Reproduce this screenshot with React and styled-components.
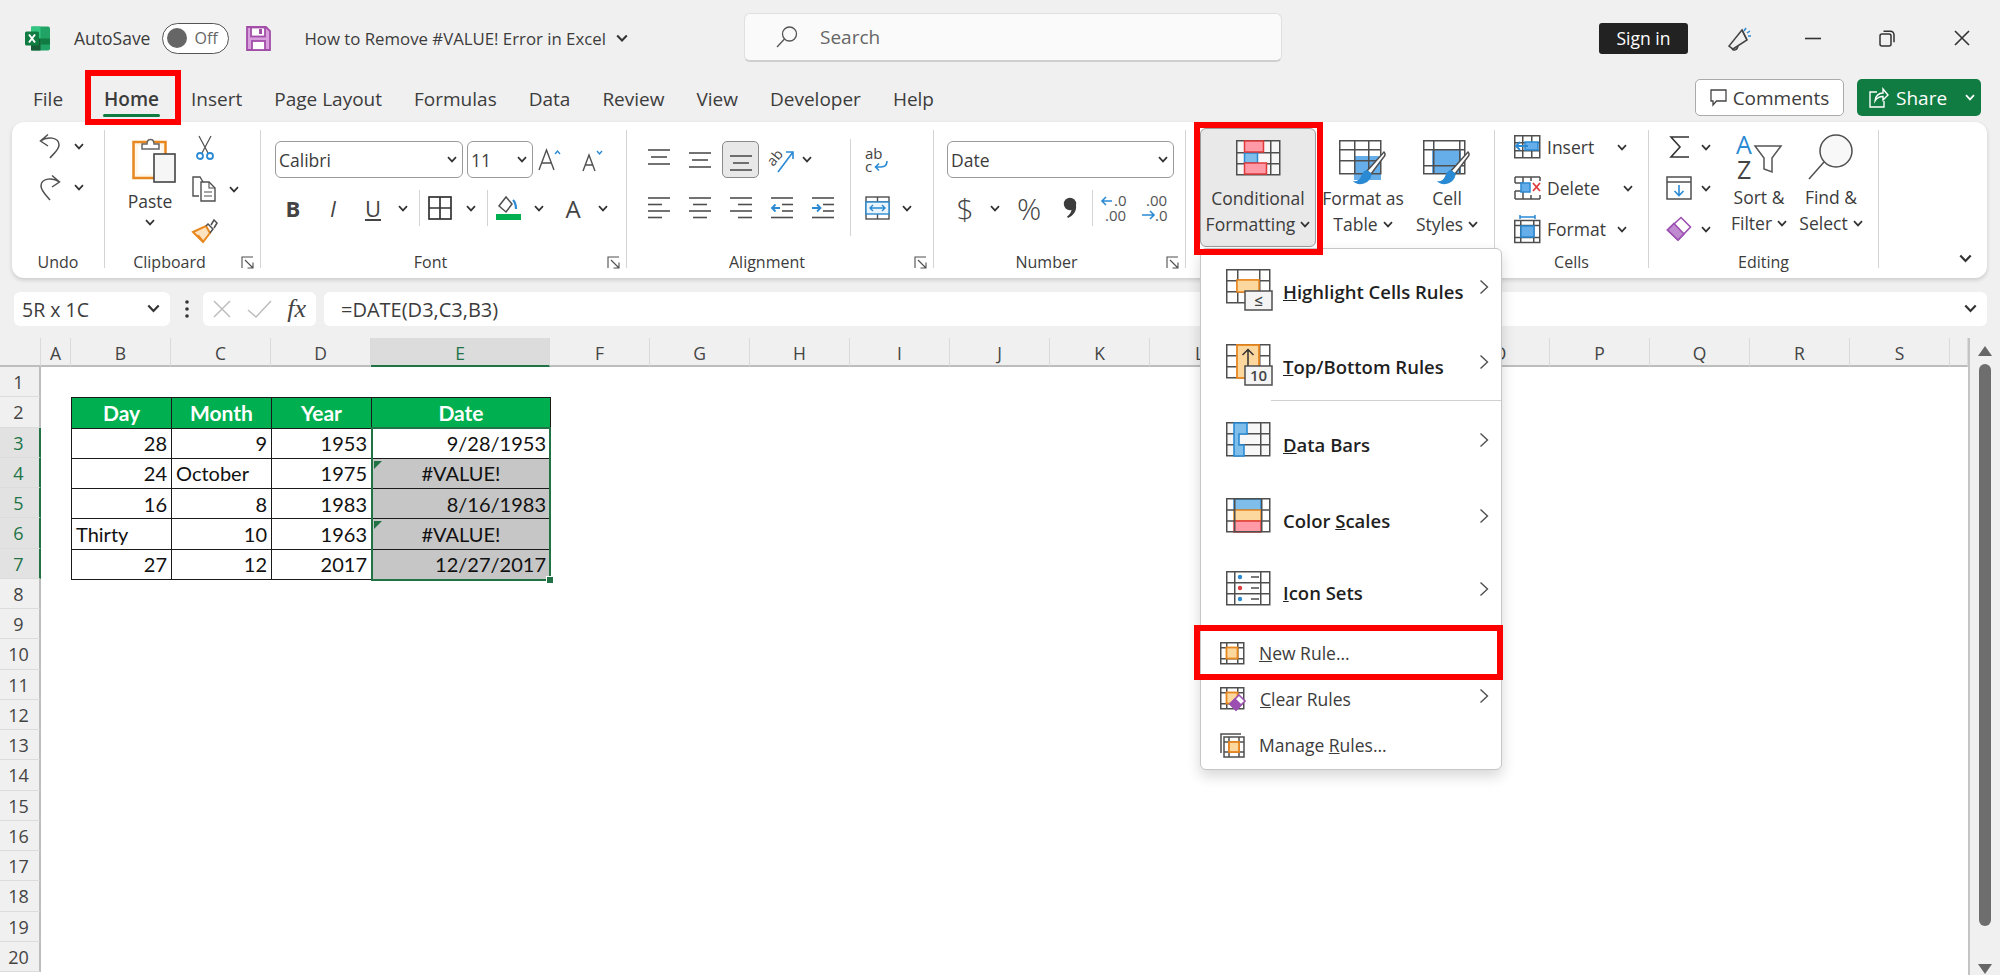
import React from "react"
import styled, { createGlobalStyle } from "styled-components"

const ui = '"Open Sans", "Noto Sans", sans-serif'
const calibri = 'Lato, "Open Sans", sans-serif'

const GlobalStyle = createGlobalStyle`
  html, body { margin: 0; padding: 0; background: #f0f0f0; }
  body { font-family: ${ui}; color: #3c3c3c; }
  svg { display: block; flex: none; overflow: visible; }
`

const Page = styled.div`
  position: relative;
  width: 2000px;
  height: 975px;
  overflow: hidden;
  display: flex;
  flex-direction: column;
  background: #f0f0f0;
`

// title bar
const TitleBar = styled.div`
  height: 76px;
  flex: none;
  display: flex;
  align-items: flex-start;
`
const TitleLeft = styled.div`
  width: 744px;
  height: 76px;
  flex: none;
  display: flex;
  align-items: center;
  padding-left: 25px;
  box-sizing: border-box;
`
const TitleText = styled.span`
  font-size: ${(p) => p.$size || 17.5}px;
  white-space: nowrap;
  margin-left: ${(p) => p.$ml || 0}px;
`
const Toggle = styled.div`
  width: 67px;
  height: 31px;
  box-sizing: border-box;
  margin-left: 12px;
  border: 1.5px solid #555;
  border-radius: 16px;
  background: #fff;
  display: flex;
  align-items: center;
  padding-left: 4px;
  gap: 7px;
  font-size: 16px;
  color: #666;
`
const Knob = styled.div`
  width: 20px;
  height: 20px;
  border-radius: 50%;
  background: #666;
`
const SearchBox = styled.div`
  width: 538px;
  height: 49px;
  margin-top: 13px;
  box-sizing: border-box;
  flex: none;
  display: flex;
  align-items: center;
  gap: 22px;
  padding-left: 31px;
  background: #fafafa;
  border: 1px solid #e0e0e0;
  border-bottom: 2px solid #cfcfcf;
  border-radius: 6px;
  font-size: 19px;
  color: #666;
`
const TitleRight = styled.div`
  flex: 1;
  height: 76px;
  display: flex;
  align-items: center;
  padding-left: 317px;
`
const SignIn = styled.div`
  width: 89px;
  height: 31px;
  border-radius: 3px;
  background: #222;
  color: #fff;
  font-size: 17.5px;
  display: flex;
  align-items: center;
  justify-content: center;
`
const WindowButton = styled.div`
  margin-left: ${(p) => p.$ml}px;
`

// tabs row
const TabRow = styled.div`
  height: 46px;
  flex: none;
  display: flex;
  align-items: flex-start;
  padding-left: 33px;
  padding-right: 19px;
  gap: 32px;
  font-size: 19px;
`
const Tab = styled.div`
  position: relative;
  line-height: 46px;
  height: 46px;
  margin-left: ${(p) => p.$ml || 0}px;
  font-weight: ${(p) => (p.$active ? 600 : 400)};
  &::after {
    content: "";
    display: ${(p) => (p.$active ? "block" : "none")};
    position: absolute;
    left: -1px;
    right: -1px;
    top: 38px;
    height: 3px;
    border-radius: 2px;
    background: #107c41;
  }
`
const TabActions = styled.div`
  margin-left: auto;
  display: flex;
  gap: 13px;
  height: 37px;
  margin-top: 3px;
`
const CommentsButton = styled.div`
  width: 149px;
  box-sizing: border-box;
  border: 1.5px solid #aaa;
  border-radius: 5px;
  background: #fff;
  display: flex;
  align-items: center;
  justify-content: center;
  gap: 6px;
  font-size: 19px;
`
const ShareButton = styled.div`
  width: 124px;
  box-sizing: border-box;
  border-radius: 5px;
  background: #107c41;
  color: #fff;
  display: flex;
  align-items: center;
  gap: 8px;
  padding-left: 12px;
  font-size: 19px;
`

// ribbon
const Ribbon = styled.div`
  height: 156px;
  flex: none;
  margin: 0 13px 0 12px;
  padding: 8px 0 10px;
  box-sizing: border-box;
  display: flex;
  background: #fff;
  border-radius: 12px;
  box-shadow: 0 2px 4px rgba(0, 0, 0, 0.16);
  font-size: 17.5px;
`
const Group = styled.div`
  flex: ${(p) => (p.$w ? `0 0 ${p.$w}px` : 1)};
  box-sizing: border-box;
  display: flex;
  flex-direction: column;
  border-right: ${(p) => (p.$w ? "1px solid #d4d4d4" : "none")};
`
const Body = styled.div`
  flex: 1;
  display: flex;
  flex-direction: ${(p) => p.$dir || "row"};
  padding-left: ${(p) => p.$pl || 0}px;
  padding-top: ${(p) => p.$pt || 0}px;
`
const GroupFooter = styled.div`
  height: 14px;
  flex: none;
  display: flex;
  align-items: center;
  font-size: 16px;
  line-height: 16px;
  transform: translateY(1px);
`
const GroupLabel = styled.div`
  flex: 1;
  text-align: center;
`
const LauncherSlot = styled.div`
  width: 26px;
  display: flex;
  justify-content: center;
`
const ToolStack = styled.div`
  display: grid;
  grid-template-columns: ${(p) => p.$cols};
  grid-auto-rows: 26px;
  row-gap: 15px;
  align-items: center;
  justify-items: center;
  padding-top: ${(p) => p.$pt || 0}px;
  margin-left: ${(p) => p.$ml || 0}px;
`
const PasteColumn = styled.div`
  width: 50px;
  display: flex;
  flex-direction: column;
  align-items: center;
  padding-top: 5px;
  line-height: 20px;
  gap: 8px;
`
const PasteIcon = styled.div`
  margin-left: 8px;
`
const ToolRow = styled.div`
  display: flex;
  align-items: center;
  height: ${(p) => p.$h || 30}px;
  margin-top: ${(p) => p.$mt || 0}px;
`
const Tool = styled.div`
  width: ${(p) => p.$w}px;
  height: 100%;
  flex: none;
  display: flex;
  align-items: center;
  justify-content: center;
`
const ActiveTool = styled(Tool)`
  box-sizing: border-box;
  margin: 0 2px;
  width: 37px;
  background: #e8e8e8;
  border: 1.5px solid #8a8a8a;
  border-radius: 5px;
`
const RowDivider = styled.div`
  width: 1px;
  height: 36px;
  flex: none;
  background: #d4d4d4;
  margin: 0 ${(p) => p.$mr || 0}px 0 ${(p) => p.$ml || 0}px;
`
const Combo = styled.div`
  width: ${(p) => p.$w}px;
  height: 37px;
  flex: none;
  box-sizing: border-box;
  margin-left: ${(p) => p.$ml || 0}px;
  border: 1.5px solid #9a9a9a;
  border-radius: 6px;
  background: #fff;
  display: flex;
  align-items: center;
  justify-content: space-between;
  padding: 0 5px 0 3px;
  font-size: 17.5px;
`
const GlyphText = styled.span`
  font-size: ${(p) => p.$size || 22}px;
  font-weight: ${(p) => p.$weight || 400};
  font-style: ${(p) => p.$italic || "normal"};
  font-family: ${(p) => p.$font || ui};
  text-decoration: ${(p) => p.$line || "none"};
  color: #444;
`
const VerticalRule = styled.div`
  width: 1px;
  height: 97px;
  margin-top: 9px;
  flex: none;
  background: #d4d4d4;
`
const AlignRight = styled.div`
  padding-left: 14px;
  padding-top: 18px;
  display: flex;
  flex-direction: column;
  gap: 23px;
`
const MergeRow = styled.div`
  display: flex;
  align-items: center;
  gap: 12px;
`
const BigButton = styled.div`
  width: ${(p) => p.$w}px;
  height: 119px;
  flex: none;
  box-sizing: border-box;
  margin-top: -2px;
  padding-top: 11px;
  text-align: center;
  line-height: 26px;
  background: ${(p) => (p.$active ? "#e9e9e9" : "transparent")};
  border: 1.5px solid ${(p) => (p.$active ? "#9c9c9c" : "transparent")};
  border-radius: 6px;
`
const BigIcon = styled.div`
  height: 45px;
  display: flex;
  justify-content: center;
`
const ButtonLine = styled.div`
  display: flex;
  align-items: center;
  justify-content: center;
  gap: 5px;
  white-space: nowrap;
`
const CellRows = styled.div`
  display: flex;
  flex-direction: column;
  gap: 15px;
  padding-top: 4px;
`
const CellRow = styled.div`
  display: flex;
  align-items: center;
  height: 26px;
  gap: 6px;
`
const CellName = styled.div`
  width: ${(p) => p.$w}px;
`
const EditColumn = styled.div`
  width: ${(p) => p.$w}px;
  flex: none;
  padding-top: 4px;
  text-align: center;
  line-height: 26px;
`
const EditIcon = styled.div`
  height: 50px;
  display: flex;
  justify-content: center;
`
const CollapseSlot = styled.div`
  flex: 1;
  display: flex;
  justify-content: flex-end;
  align-items: flex-end;
  padding: 0 15px 5px 0;
`

// formula bar
const FormulaBar = styled.div`
  height: 34px;
  flex: none;
  margin: 14px 13px 12px 14px;
  display: flex;
  font-size: 20px;
`
const BarField = styled.div`
  box-sizing: border-box;
  width: ${(p) => (p.$w ? `${p.$w}px` : "auto")};
  flex: ${(p) => (p.$w ? "none" : 1)};
  margin-left: ${(p) => p.$ml || 0}px;
  background: #fff;
  border-radius: 6px;
  display: flex;
  align-items: center;
  justify-content: space-between;
  padding: 0 10px 0 ${(p) => p.$pl || 8}px;
`
const NameValue = styled.span`
  font-size: 19.5px;
`
const Dots = styled.div`
  width: 33px;
  flex: none;
  display: flex;
  align-items: center;
  justify-content: center;
`

// sheet
const SheetArea = styled.div`
  flex: 1;
  display: flex;
  min-height: 0;
`
const SheetGrid = styled.div`
  width: 1968px;
  flex: none;
  display: grid;
  grid-template-columns: 41px 30px 100px 100px 100px 179px repeat(14, 100px) 18px;
  grid-template-rows: 29px repeat(20, 30.25px);
  background: #fff;
  border-right: 2px solid #c4c4c4;
  box-sizing: content-box;
`
const ColHead = styled.div`
  grid-row: 1;
  grid-column: ${(p) => p.$col};
  background: ${(p) => (p.$sel ? "#dcdcdc" : "#f0f0f0")};
  color: ${(p) => (p.$sel ? "#217346" : "#444")};
  border-bottom: 2px solid ${(p) => (p.$sel ? "#217346" : "#bdbdbd")};
  border-right: 1px solid #dadada;
  box-sizing: border-box;
  display: flex;
  align-items: center;
  justify-content: center;
  padding-top: 3px;
  font-size: 17.5px;
`
const RowHead = styled.div`
  grid-column: 1;
  grid-row: ${(p) => p.$row};
  background: ${(p) => (p.$sel ? "#e2e2e2" : "#f0f0f0")};
  color: ${(p) => (p.$sel ? "#217346" : "#444")};
  border-bottom: 1px solid #dcdcdc;
  border-right: 2px solid ${(p) => (p.$sel ? "#217346" : "#bdbdbd")};
  box-sizing: border-box;
  display: flex;
  align-items: center;
  justify-content: center;
  padding: 1px 2px 0 0;
  font-size: 18px;
`
const Cell = styled.div`
  position: relative;
  grid-column: ${(p) => p.$col};
  grid-row: ${(p) => p.$row};
  box-sizing: border-box;
  margin: 0 -1px -1px 0;
  border: 1px solid #1a1a1a;
  padding: 0 4px;
  display: flex;
  align-items: center;
  justify-content: ${(p) => p.$align};
  font-family: ${calibri};
  font-size: ${(p) => (p.$head ? 21 : 20)}px;
  font-weight: ${(p) => (p.$head ? 700 : 400)};
  color: ${(p) => (p.$head ? "#fff" : "#111")};
  background: ${(p) => (p.$head ? "#00b050" : p.$shade ? "#c6c6c6" : "#fff")};
  &::before {
    content: "";
    display: ${(p) => (p.$flag ? "block" : "none")};
    position: absolute;
    left: 2px;
    top: 2px;
    border-top: 8px solid #217346;
    border-right: 8px solid transparent;
  }
`
const Selection = styled.div`
  grid-column: 6;
  grid-row: 4 / 9;
  position: relative;
  z-index: 1;
  border: 2px solid #217346;
  margin: -1px -1px -2px 0;
  pointer-events: none;
  &::after {
    content: "";
    position: absolute;
    right: -5px;
    bottom: -5px;
    width: 6px;
    height: 6px;
    background: #217346;
    border: 1px solid #fff;
  }
`
const ScrollTrack = styled.div`
  flex: 1;
  display: flex;
  flex-direction: column;
  align-items: center;
  padding-top: 8px;
`
const ArrowUp = styled.div`
  border-left: 7px solid transparent;
  border-right: 7px solid transparent;
  border-bottom: 10px solid #666;
`
const ArrowDown = styled(ArrowUp)`
  border-bottom: none;
  border-top: 10px solid #666;
  margin-top: 38px;
`
const Thumb = styled.div`
  width: 12px;
  height: 562px;
  margin-top: 8px;
  border-radius: 6px;
  background: #6e6e6e;
`

// dropdown menu
const Menu = styled.div`
  position: absolute;
  z-index: 3;
  left: 1200px;
  top: 248px;
  width: 302px;
  height: 522px;
  box-sizing: border-box;
  padding-top: 5px;
  background: #fff;
  border: 1.5px solid #c6c6c6;
  border-radius: 6px;
  box-shadow: 0 6px 14px rgba(0, 0, 0, 0.16);
`
const MenuItem = styled.div`
  height: ${(p) => p.$h}px;
  margin-top: ${(p) => p.$mt || 0}px;
  display: flex;
  align-items: center;
  padding: 0 12px 0 ${(p) => (p.$big ? 25 : 19)}px;
  gap: ${(p) => (p.$big ? 10 : 14)}px;
  font-size: ${(p) => (p.$big ? 18.5 : 17.5)}px;
  font-weight: ${(p) => (p.$big ? 600 : 400)};
  color: ${(p) => (p.$big ? "#1f1f1f" : "#3c3c3c")};
  white-space: nowrap;
`
const MenuIcon = styled.div`
  height: ${(p) => p.$h}px;
`
const MenuText = styled.span`
  padding-top: ${(p) => (p.$big ? 2 : 0)}px;
`
const MenuArrow = styled.div`
  margin-left: auto;
  transform: translateY(-3px);
`
const MenuRule = styled.div`
  height: 1px;
  margin-left: 70px;
  background: #d0d0d0;
`

// red callouts drawn over the shot
const Callout = styled.div`
  position: absolute;
  z-index: 4;
  box-sizing: border-box;
  left: ${(p) => p.$x}px;
  top: ${(p) => p.$y}px;
  width: ${(p) => p.$w}px;
  height: ${(p) => p.$h}px;
  border: 6px solid #f00;
  pointer-events: none;
`

const GRAY = "#4f4f4f"
const BLUE = "#2a8ad4"
const ORANGE = "#e8871e"

const Ico = ({ w, h, children, ...rest }) => (
  <svg width={w} height={h} viewBox={`0 0 ${w} ${h}`} fill="none" stroke={GRAY} strokeWidth="1.5" {...rest}>
    {children}
  </svg>
)

const Chev = ({ w = 10, color = "#333" }) => (
  <svg width={w} height={w * 0.7} viewBox="0 0 10 7" fill="none" stroke={color} strokeWidth="1.7">
    <path d="M1 1.2 5 5.4 9 1.2" />
  </svg>
)

const ChevRight = () => (
  <Ico w={10} h={16}>
    <path d="M1.5 1.5 8.5 8 1.5 14.5" strokeWidth="1.4" />
  </Ico>
)

const Launcher = () => (
  <Ico w={13} h={13} strokeWidth="1.1">
    <path d="M1 12V1h11" stroke={GRAY} />
    <path d="M4 4l8 8M12 6.5V12H6.5" stroke={GRAY} />
  </Ico>
)

const ExcelLogo = () => (
  <Ico w={25} h={25} stroke="none">
    <rect x="6" y="0.5" width="19" height="24" rx="2" fill="#21a366" />
    <rect x="6" y="0.5" width="9.5" height="12" fill="#33c481" />
    <rect x="15.5" y="12.5" width="9.5" height="6" fill="#107c41" />
    <rect x="6" y="12.5" width="9.5" height="12" fill="#185c37" />
    <rect x="0" y="5.5" width="14" height="14" rx="1.5" fill="#107c41" />
    <path d="M4 8.5l6 8M10 8.5l-6 8" stroke="#fff" strokeWidth="2" />
  </Ico>
)

const SaveIcon = () => (
  <Ico w={25} h={25} stroke="#a24ea8" strokeWidth="1.8">
    <path d="M1 1h19l4 4v19H1z" fill="#d99fdc" />
    <rect x="5" y="1.5" width="14" height="9" fill="#fff" />
    <rect x="6" y="15" width="13" height="9" fill="#fff" />
    <rect x="13" y="3" width="3" height="5" fill="#a24ea8" stroke="none" />
  </Ico>
)

const SearchIcon = () => (
  <Ico w={22} h={22} strokeWidth="1.3" stroke="#555">
    <circle cx="13.5" cy="8" r="7" />
    <path d="M8.5 13 1 21" />
  </Ico>
)

const Megaphone = () => (
  <Ico w={25} h={26} strokeWidth="1.5" stroke="#444">
    <path d="M15 5 2 21l4 3 14-9z" />
    <path d="M5 23c0 3 5 3 6-2" />
    <path d="M15 5l5 10" />
    <path d="M17 6l2-3M20 8l3-2M21 11h3" stroke={BLUE} />
  </Ico>
)

const Minimize = () => (
  <Ico w={16} h={3}>
    <path d="M0 1.5h16" strokeWidth="1.6" stroke="#333" />
  </Ico>
)
const Restore = () => (
  <Ico w={16} h={17} stroke="#333">
    <rect x="1" y="4" width="11" height="12" rx="2" />
    <path d="M4.5 1.2h7a3.5 3.5 0 0 1 3.5 3.5v7.5" />
  </Ico>
)
const CloseIcon = () => (
  <Ico w={16} h={16} stroke="#333" strokeWidth="1.6">
    <path d="M1 1l14 14M15 1 1 15" />
  </Ico>
)
const CommentIcon = () => (
  <Ico w={17} h={17} strokeWidth="1.3" stroke="#444">
    <path d="M1 1h15v11H6.5l-3.5 4v-4H1z" />
  </Ico>
)
const ShareIcon = () => (
  <Ico w={19} h={21} stroke="#fff" strokeWidth="1.4">
    <path d="M8 5H1v15h14v-6" />
    <path d="M6 14c0-5 4-8 8-8V2l5 6-5 5V9.500c-3 0-6 1-8 4.500z" />
  </Ico>
)

const UndoIcon = () => (
  <Ico w={24} h={26}>
    <path d="M10 1.500 2.500 8l7.500 5M2.500 8C9 3 21 4 21 12c0 5-6 9-9 13" />
  </Ico>
)
const RedoIcon = () => (
  <Ico w={24} h={27}>
    <path d="M14 1.500 21.500 8 14 13M21.500 8C15 3 3 4 3 12c0 5 6 10 9 14" />
  </Ico>
)
const PasteBoard = () => (
  <Ico w={44} h={48}>
    <rect x="1.500" y="7" width="32" height="36" fill="#fff6e8" stroke={ORANGE} strokeWidth="2.500" />
    <path d="M6 11h23v28H6z" fill="#fff" stroke="none" />
    <path d="M10 14v-5h5c0-6 7-6 7 0h5v5z" fill="#fff" stroke="#666" />
    <rect x="22" y="19" width="21" height="28" fill="#f6f6f6" stroke="#444" strokeWidth="1.600" />
  </Ico>
)
const CutIcon = () => (
  <Ico w={20} h={26} strokeWidth="1.2">
    <path d="M4 1l9 17M16 1 7 18" />
    <circle cx="5" cy="21" r="3" stroke={BLUE} strokeWidth="1.800" />
    <circle cx="15" cy="21" r="3" stroke={BLUE} strokeWidth="1.800" />
  </Ico>
)
const CopyIcon = () => (
  <Ico w={26} h={26} strokeWidth="1.400">
    <path d="M7 20H1V1h7l3 5" />
    <path d="M9 6h8l6 6v13H9z" fill="#fff" />
    <path d="M17 6v6h6M12 16h8M12 20h8" strokeWidth="1.100" />
  </Ico>
)
const PainterIcon = () => (
  <Ico w={26} h={25}>
    <path d="M1 14 14 8l4 7-7 9z" fill="#fde3c0" stroke={ORANGE} strokeWidth="2" />
    <path d="M6 17l5 6" stroke={ORANGE} />
    <path d="M14 8l2-2 5 5-3 4M19 7l3-5 3 3-3 5" />
  </Ico>
)

const FontGrow = ({ up }) => (
  <Ico w={24} h={24} strokeWidth="1.400">
    <path d={up ? "M1 22 8.500 2 16 22M4 15h9" : "M2 23 8 7l6 16M4.500 17h7"} />
    <path d={up ? "M17 6l2.500-3 2.500 3" : "M16 3l2.500 3 2.500-3"} stroke={BLUE} />
  </Ico>
)
const BordersIcon = () => (
  <Ico w={24} h={24} strokeWidth="1.700" stroke="#333">
    <rect x="1" y="1" width="22" height="22" />
    <path d="M12 1v22M1 12h22" />
  </Ico>
)
const FillIcon = () => (
  <Ico w={26} h={26}>
    <path d="M10 2 3 11l7 6 6-8z" fill="#fff" />
    <path d="M17 5c3 3 3 6 3 9" stroke={BLUE} strokeWidth="2.200" />
    <rect x="0" y="19" width="25" height="6" fill="#00b050" stroke="none" />
  </Ico>
)

const CommaIcon = () => (
  <Ico w={14} h={22} stroke="none">
    <circle cx="7" cy="7" r="6.200" fill="#3c3c3c" />
    <path d="M13 8c1 6-3 11-8 13l-1-1.500c3-2 5-5 4.500-9z" fill="#3c3c3c" />
  </Ico>
)

const lineSet = (rows) =>
  rows.map(([a, b, y], i) => <path key={i} d={`M${a} ${y}H${b}`} />)

const AlignV = ({ y }) => (
  <Ico w={24} h={26} strokeWidth="1.600">
    {lineSet([
      [1, 23, y],
      [4, 20, y + 7],
      [1, 23, y + 14],
    ])}
  </Ico>
)
const AlignH = ({ kind }) => {
  const s = {
    left: [[1, 23], [1, 15], [1, 23], [1, 15]],
    center: [[1, 23], [5, 19], [1, 23], [5, 19]],
    right: [[1, 23], [9, 23], [1, 23], [9, 23]],
  }[kind]
  return (
    <Ico w={24} h={24} strokeWidth="1.600">
      {lineSet(s.map(([a, b], i) => [a, b, 2 + i * 6.500]))}
    </Ico>
  )
}
const IndentIcon = ({ more }) => (
  <Ico w={24} h={24} strokeWidth="1.600">
    {lineSet([
      [1, 23, 2],
      [12, 23, 8.500],
      [12, 23, 15],
      [1, 23, 21.500],
    ])}
    <path
      d={more ? "M1 12h8M6 8.500 9.500 12 6 15.500" : "M2 12h8M5.500 8.500 2 12l3.500 3.500"}
      stroke={BLUE}
      strokeWidth="1.800"
    />
  </Ico>
)
const OrientIcon = () => (
  <Ico w={28} h={26}>
    <text x="0" y="15" transform="rotate(-50 8 12)" fontFamily={ui} fontSize="14" fill="#444" stroke="none">
      ab
    </text>
    <path d="M10 25 25 5M18 5h7v7" stroke={BLUE} strokeWidth="1.600" />
  </Ico>
)
const WrapIcon = () => (
  <Ico w={24} h={25}>
    <text x="0" y="11" fontFamily={ui} fontSize="15" fill="#444" stroke="none">
      ab
    </text>
    <text x="0" y="24" fontFamily={ui} fontSize="15" fill="#444" stroke="none">
      c
    </text>
    <path d="M22 13c0 4-2 6-6 6h-5M14 15.500 10.500 19l3.500 3.500" stroke={BLUE} strokeWidth="1.600" />
  </Ico>
)
const MergeIcon = () => (
  <Ico w={25} h={24} strokeWidth="1.400">
    <rect x="1" y="1" width="23" height="22" />
    <path d="M12.500 1v5M12.500 18v5M1 6h23" />
    <rect x="1" y="6" width="23" height="12" fill="#eaf4fc" stroke={BLUE} />
    <path d="M5 12h15M8 9l-3 3 3 3M17 9l3 3-3 3" stroke={BLUE} />
  </Ico>
)
const DecimalIcon = ({ inc }) => (
  <Ico w={28} h={28} strokeWidth="1.600">
    <text x={inc ? 13 : 5} y="12" fontFamily={ui} fontSize="15" fill="#555" stroke="none">
      {inc ? ".0" : ".00"}
    </text>
    <text x={inc ? 4 : 14} y="27" fontFamily={ui} fontSize="15" fill="#555" stroke="none">
      {inc ? ".00" : ".0"}
    </text>
    {inc ? (
      <path d="M11 7H1M5 3 1 7l4 4" stroke={BLUE} />
    ) : (
      <path d="M1 21h12M9 17l4 4-4 4" stroke={BLUE} />
    )}
  </Ico>
)

const GridLines = ({ x = 0.75, y = 0.75, w, h, cols, rows, sw = 1.5 }) => (
  <g strokeWidth={sw} stroke={GRAY}>
    <rect x={x} y={y} width={w} height={h} />
    {cols.map((c) => (
      <path key={"c" + c} d={`M${x + c} ${y}v${h}`} />
    ))}
    {rows.map((r) => (
      <path key={"r" + r} d={`M${x} ${y + r}h${w}`} />
    ))}
  </g>
)

const CondFormatIcon = () => (
  <Ico w={45} h={36}>
    <rect x="0.750" y="0.750" width="43" height="34" fill="#f7f7f7" stroke="none" />
    <GridLines w={43} h={34} cols={[8, 34]} rows={[12, 23]} />
    <rect x="8.500" y="13" width="13" height="10" fill="#7fbdea" stroke={BLUE} />
    <path d="M8.500 1h19v11h-19zM8.500 23h22v11h-22z" fill="#ff9aa6" stroke="#e03b3b" strokeWidth="1.500" />
  </Ico>
)
const TableIcon = ({ full }) => (
  <Ico w={48} h={46}>
    <rect x="1" y="1" width="41" height="33" fill="#fff" stroke="none" />
    {full ? (
      <rect x="9" y="9" width="29" height="24" fill="#66aeea" stroke="none" />
    ) : (
      <rect x="15" y="16" width="27" height="24" fill="#66aeea" stroke="none" />
    )}
    <GridLines
      w={41}
      h={33}
      cols={full ? [10, 36] : [15, 29]}
      rows={full ? [9, 25] : [9, 20]}
    />
    <path d="M45 12c2 2 1 4-1 6L32 34l-4-3z" fill="#fff" />
    <path d="M28 31c-2 0-4 2-5 5-1 4-5 6-7 6 4 3 14 2 16-8z" fill={BLUE} stroke={BLUE} />
  </Ico>
)
const InsertIcon = () => (
  <Ico w={27} h={24}>
    <GridLines w={25} h={22} cols={[8, 17]} rows={[7, 15]} />
    <rect x="11" y="7" width="13" height="8" fill="#66aeea" stroke={BLUE} />
    <path d="M14 11H2M6 7 2 11l4 4" stroke={BLUE} strokeWidth="1.800" />
  </Ico>
)
const DeleteIcon = () => (
  <Ico w={27} h={24}>
    <path d="M1 7h8M1 15h8M1 1h25M1 23h25M1 1v6M1 15v8M26 1v4M26 19v4M9 1v6M17 1v4M9 15v8M17 19v4" />
    <rect x="7" y="7" width="9" height="9" fill="#66aeea" stroke={BLUE} />
    <path d="M19 7l7 8M26 7l-7 8" stroke="#e03b3b" strokeWidth="1.800" />
  </Ico>
)
const FormatCellIcon = () => (
  <Ico w={27} h={28}>
    <path d="M6 2h15M6 0v4M21 0v4" stroke={BLUE} strokeWidth="1.500" />
    <GridLines y={5.500} w={25} h={22} cols={[6, 19]} rows={[5, 17]} />
    <rect x="7" y="11" width="13" height="11" fill="#66aeea" stroke={BLUE} />
  </Ico>
)
const SigmaIcon = () => (
  <Ico w={21} h={24} strokeWidth="1.600" stroke="#333">
    <path d="M20 2H2l9 10-9 10h18" />
  </Ico>
)
const FillDownIcon = () => (
  <Ico w={26} h={24}>
    <rect x="1" y="1" width="24" height="22" fill="#fff" />
    <path d="M1 6h24" />
    <path d="M13 9v10M8.500 15 13 19.500 17.500 15" stroke={BLUE} strokeWidth="1.600" />
  </Ico>
)
const EraserIcon = () => (
  <Ico w={26} h={26} stroke="#9b4fb0" strokeWidth="1.600">
    <path d="M15 1.500 24.500 11 12 24 1.500 14z" fill="#fff" />
    <path d="M8 7.500 18 18 12 24 1.500 14z" fill="#c08ad0" />
  </Ico>
)
const SortIcon = () => (
  <Ico w={46} h={46}>
    <text x="0" y="20" fontFamily={ui} fontSize="25" fill={BLUE} stroke="none">
      A
    </text>
    <text x="1" y="45" fontFamily={ui} fontSize="25" fill="#444" stroke="none">
      Z
    </text>
    <path d="M19 12h26L36 24v14l-8-3V24z" fill="#fff" stroke="#555" />
  </Ico>
)
const FindIcon = () => (
  <Ico w={46} h={46} strokeWidth="1.500">
    <circle cx="28" cy="17" r="16" fill="#f8f8f8" />
    <path d="M16 28 1 45" />
  </Ico>
)

const OverlayBox = ({ label }) => (
  <g>
    <rect x="19" y="22" width="27" height="19" fill="#f4f4f4" />
    <text x="32.500" y="37" textAnchor="middle" fontFamily={ui} fontSize="15" fill="#444" stroke="none">
      {label}
    </text>
  </g>
)
const HighlightIcon = () => (
  <Ico w={47} h={42}>
    <rect x="11" y="11" width="22" height="12" fill="#fcd79e" stroke={ORANGE} />
    <GridLines w={43} h={33} cols={[11, 33]} rows={[11, 22]} />
    <rect x="11" y="11" width="22" height="12" fill="#fcd79e" stroke={ORANGE} />
    <OverlayBox label="≤" />
  </Ico>
)
const TopBottomIcon = () => (
  <Ico w={47} h={42}>
    <GridLines w={43} h={33} cols={[11, 33]} rows={[11, 22]} />
    <rect x="11" y="1" width="22" height="33" fill="#fcd79e" stroke={ORANGE} strokeWidth="1.800" />
    <path d="M22 22V6M16.500 11 22 5.500 27.500 11" stroke="#333" />
    <OverlayBox label="10" />
  </Ico>
)
const DataBarsIcon = () => (
  <Ico w={47} h={36}>
    <rect x="1" y="1" width="43" height="33" fill="#f7f7f7" stroke="none" />
    <GridLines w={43} h={33} cols={[8, 34]} rows={[11, 22]} />
    <path d="M8 1h13v11h-8v11h5v11H8z" fill="#7fbdea" stroke={BLUE} strokeWidth="1.600" />
  </Ico>
)
const ColorScalesIcon = () => (
  <Ico w={47} h={36}>
    <rect x="8" y="1" width="27" height="11" fill="#7fbdea" stroke={BLUE} />
    <rect x="8" y="12" width="27" height="11" fill="#fcd79e" stroke={ORANGE} />
    <rect x="8" y="23" width="27" height="11" fill="#ff9aa6" stroke="#e03b3b" />
    <GridLines w={43} h={33} cols={[8, 35]} rows={[]} />
    <path d="M1 12h7M1 23h7M35 12h8M35 23h8" />
  </Ico>
)
const IconSetsIcon = () => (
  <Ico w={47} h={36}>
    <GridLines w={43} h={33} cols={[8, 34]} rows={[11, 22]} />
    <circle cx="14" cy="6" r="2.200" fill={BLUE} stroke="none" />
    <circle cx="14" cy="17" r="2.200" fill="#e03b3b" stroke="none" />
    <circle cx="14" cy="28" r="2.200" fill={BLUE} stroke="none" />
    <path d="M25 6h8M25 17h8M25 28h8" />
  </Ico>
)
const NewRuleIcon = () => (
  <Ico w={25} h={23}>
    <GridLines w={23} h={21} cols={[6, 17]} rows={[5, 16]} />
    <rect x="6.500" y="5.500" width="11" height="11" fill="#fcd79e" stroke={ORANGE} strokeWidth="1.800" />
  </Ico>
)
const ClearRulesIcon = () => (
  <Ico w={26} h={24}>
    <GridLines w={23} h={21} cols={[6, 17]} rows={[5, 16]} />
    <rect x="6.500" y="5.500" width="11" height="11" fill="#fcd79e" stroke={ORANGE} strokeWidth="1.800" />
    <path d="M19 8l6 6-9 9-6-6z" fill="#fff" stroke="#9b4fb0" strokeWidth="1.600" />
    <path d="M15 12l6 6-5 5-6-6z" fill="#9b4fb0" stroke="#9b4fb0" />
  </Ico>
)
const ManageRulesIcon = () => (
  <Ico w={25} h={25}>
    <path d="M1 20V1h20" />
    <GridLines x={4} y={4} w={20} h={20} cols={[5, 15]} rows={[5, 15]} />
    <rect x="9" y="9" width="10" height="10" fill="#fcd79e" stroke={ORANGE} strokeWidth="1.800" />
  </Ico>
)

const LabelRow = ({ children, launcher }) => (
  <GroupFooter>
    <GroupLabel>{children}</GroupLabel>
    {launcher && (
      <LauncherSlot>
        <Launcher />
      </LauncherSlot>
    )}
  </GroupFooter>
)

const LEFT_COLS = ["A", "B", "C", "D", "E", "F", "G", "H", "I", "J", "K", "L", "M", "N", "O", "P", "Q", "R", "S"]
const TABLE = [
  ["Day", "Month", "Year", "Date"],
  [28, 9, 1953, "9/28/1953"],
  [24, "October", 1975, "#VALUE!"],
  [16, 8, 1983, "8/16/1983"],
  ["Thirty", 10, 1963, "#VALUE!"],
  [27, 12, 2017, "12/27/2017"],
]

const cellAlign = (value, head) => {
  if (head || value === "#VALUE!") return "center"
  if (typeof value === "number" || value.includes("/")) return "flex-end"
  return "flex-start"
}

function Sheet() {
  const rowHeads = []
  for (let r = 1; r <= 20; r++) {
    rowHeads.push(
      <RowHead key={r} $row={r + 1} $sel={r >= 3 && r <= 7}>
        {r}
      </RowHead>
    )
  }
  return (
    <SheetGrid>
      <ColHead $col={1} />
      {LEFT_COLS.map((c, i) => (
        <ColHead key={c} $col={i + 2} $sel={c === "E"}>
          {c}
        </ColHead>
      ))}
      <ColHead $col={21} />
      {rowHeads}
      {TABLE.map((row, r) =>
        row.map((value, c) => {
          const isE = c === 3
          return (
            <Cell
              key={`${r}-${c}`}
              $col={c + 3}
              $row={r + 3}
              $head={r === 0}
              $align={cellAlign(value, r === 0)}
              $shade={isE && r > 1}
              $flag={value === "#VALUE!"}
            >
              {value}
            </Cell>
          )
        })
      )}
      <Selection />
    </SheetGrid>
  )
}

export default function App() {
  return (
    <Page>
      <GlobalStyle />

      <TitleBar>
        <TitleLeft>
          <ExcelLogo />
          <TitleText $ml={24}>AutoSave</TitleText>
          <Toggle>
            <Knob />
            Off
          </Toggle>
          <WindowButton $ml={17}>
            <SaveIcon />
          </WindowButton>
          <TitleText $ml={33} $size={16.8}>
            How to Remove #VALUE! Error in Excel
          </TitleText>
          <WindowButton $ml={10}>
            <Chev w={12} />
          </WindowButton>
        </TitleLeft>
        <SearchBox>
          <SearchIcon />
          Search
        </SearchBox>
        <TitleRight>
          <SignIn>Sign in</SignIn>
          <WindowButton $ml={39}>
            <Megaphone />
          </WindowButton>
          <WindowButton $ml={53}>
            <Minimize />
          </WindowButton>
          <WindowButton $ml={58}>
            <Restore />
          </WindowButton>
          <WindowButton $ml={59}>
            <CloseIcon />
          </WindowButton>
        </TitleRight>
      </TitleBar>

      <TabRow>
        <Tab>File</Tab>
        <Tab $active $ml={9}>
          Home
        </Tab>
        <Tab>Insert</Tab>
        <Tab>Page Layout</Tab>
        <Tab>Formulas</Tab>
        <Tab>Data</Tab>
        <Tab>Review</Tab>
        <Tab>View</Tab>
        <Tab>Developer</Tab>
        <Tab>Help</Tab>
        <TabActions>
          <CommentsButton>
            <CommentIcon />
            Comments
          </CommentsButton>
          <ShareButton>
            <ShareIcon />
            Share
            <WindowButton $ml={10}>
              <Chev color="#fff" />
            </WindowButton>
          </ShareButton>
        </TabActions>
      </TabRow>

      <Ribbon>
        <Group $w={93}>
          <Body $pl={26}>
            <ToolStack $cols="24px 34px" $pt={3}>
              <UndoIcon />
              <Chev />
              <RedoIcon />
              <Chev />
            </ToolStack>
          </Body>
          <LabelRow>Undo</LabelRow>
        </Group>

        <Group $w={156}>
          <Body $pl={20}>
            <PasteColumn>
              <PasteIcon>
                <PasteBoard />
              </PasteIcon>
              Paste
              <Chev />
            </PasteColumn>
            <ToolStack $cols="26px 32px" $pt={5} $ml={17}>
              <CutIcon />
              <span />
              <CopyIcon />
              <Chev />
              <PainterIcon />
              <span />
            </ToolStack>
          </Body>
          <LabelRow launcher>Clipboard</LabelRow>
        </Group>

        <Group $w={366}>
          <Body $dir="column" $pl={12} $pt={11}>
            <ToolRow $h={37}>
              <Combo $w={188} $ml={2}>
                Calibri
                <Chev />
              </Combo>
              <Combo $w={66} $ml={4}>
                11
                <Chev />
              </Combo>
              <Tool $w={33}>
                <FontGrow up />
              </Tool>
              <Tool $w={54}>
                <FontGrow />
              </Tool>
            </ToolRow>
            <ToolRow $mt={15}>
              <Tool $w={40}>
                <GlyphText $weight={700}>B</GlyphText>
              </Tool>
              <Tool $w={40}>
                <GlyphText $italic="italic">I</GlyphText>
              </Tool>
              <Tool $w={40}>
                <GlyphText $line="underline">U</GlyphText>
              </Tool>
              <Tool $w={20}>
                <Chev />
              </Tool>
              <RowDivider $ml={6} $mr={5} />
              <Tool $w={30}>
                <BordersIcon />
              </Tool>
              <Tool $w={32}>
                <Chev />
              </Tool>
              <RowDivider />
              <Tool $w={42}>
                <FillIcon />
              </Tool>
              <Tool $w={18}>
                <Chev />
              </Tool>
              <Tool $w={50}>
                <GlyphText $size={24}>A</GlyphText>
              </Tool>
              <Tool $w={10}>
                <Chev />
              </Tool>
            </ToolRow>
          </Body>
          <LabelRow launcher>Font</LabelRow>
        </Group>

        <Group $w={307}>
          <Body $pl={11}>
            <div>
              <ToolRow $h={37} $mt={11}>
                <Tool $w={41}>
                  <AlignV y={3} />
                </Tool>
                <Tool $w={41}>
                  <AlignV y={6} />
                </Tool>
                <ActiveTool $w={37}>
                  <AlignV y={9} />
                </ActiveTool>
                <Tool $w={41}>
                  <OrientIcon />
                </Tool>
                <Tool $w={10}>
                  <Chev />
                </Tool>
              </ToolRow>
              <ToolRow $mt={15}>
                <Tool $w={41}>
                  <AlignH kind="left" />
                </Tool>
                <Tool $w={41}>
                  <AlignH kind="center" />
                </Tool>
                <Tool $w={41}>
                  <AlignH kind="right" />
                </Tool>
                <Tool $w={41}>
                  <IndentIcon />
                </Tool>
                <Tool $w={41}>
                  <IndentIcon more />
                </Tool>
                <Tool $w={7} />
              </ToolRow>
            </div>
            <VerticalRule />
            <AlignRight>
              <WrapIcon />
              <MergeRow>
                <MergeIcon />
                <Chev />
              </MergeRow>
            </AlignRight>
          </Body>
          <LabelRow launcher>Alignment</LabelRow>
        </Group>

        <Group $w={252}>
          <Body $dir="column" $pl={13} $pt={11}>
            <ToolRow $h={37}>
              <Combo $w={227}>
                Date
                <Chev />
              </Combo>
            </ToolRow>
            <ToolRow $mt={15}>
              <Tool $w={36}>
                <GlyphText $size={30} $weight={300}>
                  $
                </GlyphText>
              </Tool>
              <Tool $w={24}>
                <Chev />
              </Tool>
              <Tool $w={44}>
                <GlyphText $size={30} $weight={300}>
                  %
                </GlyphText>
              </Tool>
              <Tool $w={38}>
                <CommaIcon />
              </Tool>
              <RowDivider $ml={3} />
              <Tool $w={44}>
                <DecimalIcon inc />
              </Tool>
              <Tool $w={36}>
                <DecimalIcon />
              </Tool>
            </ToolRow>
          </Body>
          <LabelRow launcher>Number</LabelRow>
        </Group>

        <Group $w={309}>
          <Body $pl={14}>
            <BigButton $w={116} $active>
              <BigIcon>
                <CondFormatIcon />
              </BigIcon>
              Conditional
              <ButtonLine>
                Formatting
                <Chev />
              </ButtonLine>
            </BigButton>
            <BigButton $w={94}>
              <BigIcon>
                <TableIcon />
              </BigIcon>
              Format as
              <ButtonLine>
                Table
                <Chev />
              </ButtonLine>
            </BigButton>
            <BigButton $w={74}>
              <BigIcon>
                <TableIcon full />
              </BigIcon>
              Cell
              <ButtonLine>
                Styles
                <Chev />
              </ButtonLine>
            </BigButton>
          </Body>
        </Group>

        <Group $w={154}>
          <Body $pl={19}>
            <CellRows>
              <CellRow>
                <InsertIcon />
                <CellName $w={64}>Insert</CellName>
                <Chev />
              </CellRow>
              <CellRow>
                <DeleteIcon />
                <CellName $w={70}>Delete</CellName>
                <Chev />
              </CellRow>
              <CellRow>
                <FormatCellIcon />
                <CellName $w={64}>Format</CellName>
                <Chev />
              </CellRow>
            </CellRows>
          </Body>
          <LabelRow>Cells</LabelRow>
        </Group>

        <Group $w={230}>
          <Body $pl={17}>
            <ToolStack $cols="26px 28px" $pt={4}>
              <SigmaIcon />
              <Chev />
              <FillDownIcon />
              <Chev />
              <EraserIcon />
              <Chev />
            </ToolStack>
            <EditColumn $w={78}>
              <EditIcon>
                <SortIcon />
              </EditIcon>
              Sort &amp;
              <ButtonLine>
                Filter
                <Chev />
              </ButtonLine>
            </EditColumn>
            <EditColumn $w={66}>
              <EditIcon>
                <FindIcon />
              </EditIcon>
              Find &amp;
              <ButtonLine>
                Select
                <Chev />
              </ButtonLine>
            </EditColumn>
          </Body>
          <LabelRow>Editing</LabelRow>
        </Group>

        <Group>
          <CollapseSlot>
            <Chev w={13} />
          </CollapseSlot>
        </Group>
      </Ribbon>

      <FormulaBar>
        <BarField $w={156}>
          <NameValue>5R x 1C</NameValue>
          <Chev w={13} />
        </BarField>
        <Dots>
          <svg width="4" height="18" viewBox="0 0 4 18" fill="#333">
            <circle cx="2" cy="2" r="1.800" />
            <circle cx="2" cy="9" r="1.800" />
            <circle cx="2" cy="16" r="1.800" />
          </svg>
        </Dots>
        <BarField $w={113} $pl={9}>
          <Ico w={20} h={20} stroke="#bdbdbd" strokeWidth="1.500">
            <path d="M2 2l16 16M18 2 2 18" />
          </Ico>
          <Ico w={26} h={20} stroke="#bdbdbd" strokeWidth="1.500">
            <path d="M1 11l8 7L24 2" />
          </Ico>
          <GlyphText $size={26} $italic="italic" $font='"Liberation Serif", serif'>
            fx
          </GlyphText>
        </BarField>
        <BarField $ml={8} $pl={17}>
          =DATE(D3,C3,B3)
          <Chev w={13} />
        </BarField>
      </FormulaBar>

      <SheetArea>
        <Sheet />
        <ScrollTrack>
          <ArrowUp />
          <Thumb />
          <ArrowDown />
        </ScrollTrack>
      </SheetArea>

      <Menu>
        <MenuItem $big $h={72}>
          <MenuIcon $h={42}>
            <HighlightIcon />
          </MenuIcon>
          <MenuText $big>
            <u>H</u>ighlight Cells Rules
          </MenuText>
          <MenuArrow>
            <ChevRight />
          </MenuArrow>
        </MenuItem>
        <MenuItem $big $h={70} $mt={4}>
          <MenuIcon $h={42}>
            <TopBottomIcon />
          </MenuIcon>
          <MenuText $big>
            <u>T</u>op/Bottom Rules
          </MenuText>
          <MenuArrow>
            <ChevRight />
          </MenuArrow>
        </MenuItem>
        <MenuRule />
        <MenuItem $big $h={84}>
          <MenuIcon $h={42}>
            <DataBarsIcon />
          </MenuIcon>
          <MenuText $big>
            <u>D</u>ata Bars
          </MenuText>
          <MenuArrow>
            <ChevRight />
          </MenuArrow>
        </MenuItem>
        <MenuItem $big $h={68}>
          <MenuIcon $h={42}>
            <ColorScalesIcon />
          </MenuIcon>
          <MenuText $big>
            Color <u>S</u>cales
          </MenuText>
          <MenuArrow>
            <ChevRight />
          </MenuArrow>
        </MenuItem>
        <MenuItem $big $h={77}>
          <MenuIcon $h={42}>
            <IconSetsIcon />
          </MenuIcon>
          <MenuText $big>
            <u>I</u>con Sets
          </MenuText>
          <MenuArrow>
            <ChevRight />
          </MenuArrow>
        </MenuItem>
        <MenuItem $h={46}>
          <NewRuleIcon />
          <MenuText>
            <u>N</u>ew Rule...
          </MenuText>
        </MenuItem>
        <MenuItem $h={46}>
          <ClearRulesIcon />
          <MenuText>
            <u>C</u>lear Rules
          </MenuText>
          <MenuArrow>
            <ChevRight />
          </MenuArrow>
        </MenuItem>
        <MenuItem $h={46}>
          <ManageRulesIcon />
          <MenuText>
            Manage <u>R</u>ules...
          </MenuText>
        </MenuItem>
      </Menu>

      <Callout $x={85} $y={70} $w={96} $h={55} />
      <Callout $x={1194} $y={122} $w={129} $h={133} />
      <Callout $x={1194} $y={625} $w={309} $h={55} />
    </Page>
  )
}
